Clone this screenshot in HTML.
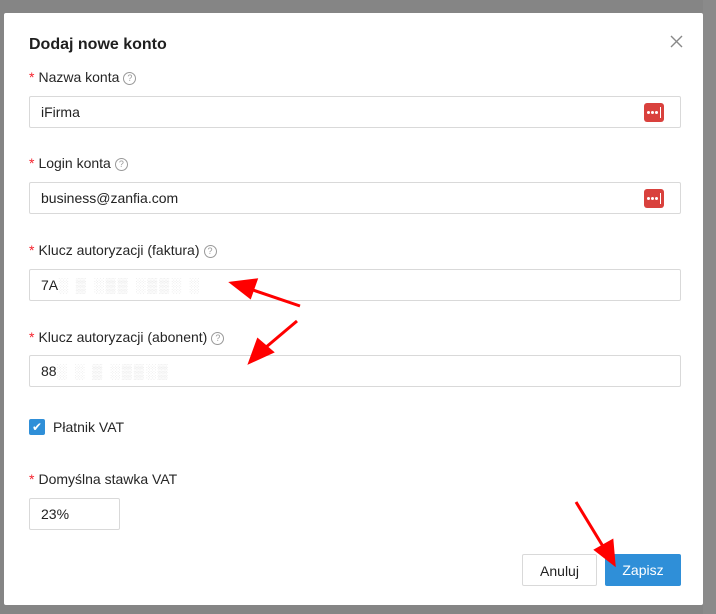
<!DOCTYPE html>
<html><head><style>
body{margin:0;width:716px;height:614px;background:#858585;position:relative;overflow:hidden;font-family:"Liberation Sans",sans-serif;color:#222}
.bgr{position:absolute;left:703px;top:0;width:13px;height:614px;background:#8a8a8a}
.modal{position:absolute;left:4px;top:13px;width:699px;height:592px;background:#fff;border-radius:2px}
.t{position:absolute;left:29px;top:36px;font-size:16px;font-weight:bold;color:#1f1f1f}
.lbl{position:absolute;left:29px;font-size:14px;color:#262626}
.lbl b{color:#f5222d;font-weight:normal;margin-right:4px}
.q{display:inline-block;width:11px;height:11px;border:1px solid #999;border-radius:50%;font-size:9px;text-align:center;line-height:11px;color:#999;margin-left:4px;vertical-align:1px}
.inp{position:absolute;left:29px;height:30px;border:1px solid #d9d9d9;border-radius:2px;font-size:14px;line-height:30px;padding-left:11px;box-sizing:content-box;width:639px}
.pw{position:absolute;right:16px;top:6px;width:20px;height:19px;background:#d9413d;border-radius:3px}
.pw i{position:absolute;top:8px;width:3px;height:3px;background:#fff;border-radius:50%}
.pw s{position:absolute;left:16px;top:4px;width:1px;height:11px;background:#fff}
.btn{position:absolute;top:554px;height:32px;border-radius:2px;font-size:14px;line-height:32px;text-align:center;box-sizing:border-box}
.m{color:#e4e4e4;letter-spacing:2px}
</style></head><body>
<div class="bgr"></div>
<div class="modal"></div>
<div class="t">Dodaj nowe konto</div>
<svg style="position:absolute;left:670px;top:35px" width="13" height="13"><path d="M1 1L12 12M12 1L1 12" stroke="#888" stroke-width="1.4"/></svg>
<div class="lbl" style="top:69px"><b>*</b>Nazwa konta<span class="q">?</span></div>
<div class="inp" style="top:96px">iFirma<span class="pw"><i style="left:3px"></i><i style="left:7px"></i><i style="left:11px"></i><s></s></span></div>
<div class="lbl" style="top:155px"><b>*</b>Login konta<span class="q">?</span></div>
<div class="inp" style="top:182px">business@zanfia.com<span class="pw"><i style="left:3px"></i><i style="left:7px"></i><i style="left:11px"></i><s></s></span></div>
<div class="lbl" style="top:242px"><b>*</b>Klucz autoryzacji (faktura)<span class="q">?</span></div>
<div class="inp" style="top:269px">7A<span class="m">░ ▒ ░▒▒ ░▒▒░ ░</span></div>
<div class="lbl" style="top:329px"><b>*</b>Klucz autoryzacji (abonent)<span class="q">?</span></div>
<div class="inp" style="top:355px">88<span class="m">░ ░ ▒ ░▒▒░▒</span></div>
<div style="position:absolute;left:29px;top:419px;width:16px;height:16px;background:#2f8fd8;border-radius:2px;color:#fff;font-size:12px;text-align:center;line-height:16px">✔</div>
<div class="lbl" style="left:53px;top:419px">Płatnik VAT</div>
<div class="lbl" style="top:471px"><b>*</b>Domyślna stawka VAT</div>
<div class="inp" style="top:498px;width:78px">23%</div>
<div class="btn" style="left:522px;width:75px;border:1px solid #d9d9d9;color:#222">Anuluj</div>
<div class="btn" style="left:605px;width:76px;background:#2f8fd8;color:#fff">Zapisz</div>
<svg style="position:absolute;left:0;top:0" width="716" height="614">
<g stroke="#f00" stroke-width="3" fill="#f00">
<line x1="300" y1="306" x2="250" y2="289"/><polygon points="232,283 256,280 250,297"/>
<line x1="297" y1="321" x2="265" y2="348"/><polygon points="250,362 258,340 272,352"/>
<line x1="576" y1="502" x2="604" y2="548"/><polygon points="614,564 596,550 612,541"/>
</g></svg>
</body></html>
